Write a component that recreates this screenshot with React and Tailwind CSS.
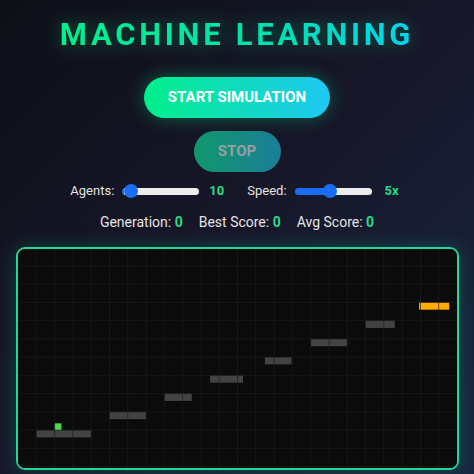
import { useState } from 'react';

// plataformas en coordenadas del canvas (960x480)
const plataformas = [
  { x: 40, y: 397, w: 120 },
  { x: 200, y: 357, w: 80 },
  { x: 320, y: 317, w: 60 },
  { x: 420, y: 277, w: 72 },
  { x: 540, y: 237, w: 58 },
  { x: 640, y: 197, w: 80 },
  { x: 760, y: 157, w: 64 },
];

const meta = { x: 877, y: 117, w: 66 };

const Lienzo = () => {
  const lineasV = [];
  for (let x = 40; x < 960; x += 40) lineasV.push(x);
  const lineasH = [];
  for (let y = 37; y < 480; y += 40) lineasH.push(y);

  return (
    <svg viewBox="0 0 960 480" preserveAspectRatio="none" className="block w-full h-full">
      <rect x="0" y="0" width="960" height="480" fill="#0b0b0c" />
      {plataformas.map((p, i) => (
        <rect key={i} x={p.x} y={p.y} width={p.w} height="16" fill="#434343" />
      ))}
      <rect x={meta.x} y={meta.y} width={meta.w} height="16" fill="#ffaa00" />
      <rect x="80" y="382" width="15" height="15" fill="#44dd44" />
      <g stroke="#1e1e1e" strokeOpacity="0.75" strokeWidth="2">
        {lineasV.map((x) => (
          <line key={'v' + x} x1={x} y1="0" x2={x} y2="480" />
        ))}
        {lineasH.map((y) => (
          <line key={'h' + y} x1="0" y1={y} x2="960" y2={y} />
        ))}
      </g>
    </svg>
  );
};

const Deslizador = ({ min, max, value, onChange, className }) => {
  const pct = ((value - min) / (max - min)) * 100;
  return (
    <input
      type="range"
      min={min}
      max={max}
      value={value}
      onChange={(e) => onChange(Number(e.target.value))}
      style={{
        background: `linear-gradient(90deg, #1a6ef5 0%, #1a6ef5 ${pct}%, #ececec ${pct}%, #ececec 100%)`,
      }}
      className={
        'appearance-none h-[7px] rounded-full outline-none cursor-pointer ' +
        '[&::-webkit-slider-thumb]:appearance-none [&::-webkit-slider-thumb]:w-[14px] [&::-webkit-slider-thumb]:h-[14px] ' +
        '[&::-webkit-slider-thumb]:rounded-full [&::-webkit-slider-thumb]:bg-[#1a6ef5] ' +
        className
      }
    />
  );
};

const App = () => {
  const [agentes, setAgentes] = useState(10);
  const [velocidad, setVelocidad] = useState(5);

  return (
    <div
      className="min-h-screen w-full flex flex-col items-center bg-[linear-gradient(135deg,#0f0f18_0%,#17172a_50%,#182640_100%)] text-[#e4e4e4]"
      style={{ fontFamily: 'Roboto, "Liberation Sans", sans-serif' }}
    >
      <h1 className="pt-[19px] text-[31px] leading-none font-bold tracking-[3.7px] bg-[linear-gradient(90deg,#00f08a,#00e0b0_60%,#00d4ee)] bg-clip-text text-transparent drop-shadow-[0_0_10px_rgba(0,255,150,0.35)]">
        MACHINE LEARNING
      </h1>

      <button className="mt-[27px] w-[186px] h-[41px] rounded-full bg-[linear-gradient(90deg,#00f08a,#1ec8f2)] text-white text-[15px] font-bold shadow-[0_0_18px_rgba(0,240,140,0.35)]">
        START SIMULATION
      </button>

      <button
        disabled
        className="mt-[13px] w-[87px] h-[41px] rounded-full bg-[linear-gradient(90deg,#10986b,#1b7e98)] text-[#97a0a0] text-[15px] font-bold"
      >
        STOP
      </button>

      <div className="mt-[9px] h-[20px] pr-[5px] flex items-center text-[13px]">
        <span>Agents:</span>
        <Deslizador min={5} max={200} value={agentes} onChange={setAgentes} className="ml-[8px] w-[77px]" />
        <span className="ml-[10px] w-[18px] font-bold text-[#22dd88]">{agentes}</span>
        <span className="ml-[20px]">Speed:</span>
        <Deslizador min={1} max={10} value={velocidad} onChange={setVelocidad} className="ml-[8px] w-[77px]" />
        <span className="ml-[13px] font-bold text-[#22dd88]">{velocidad}x</span>
      </div>

      <div className="mt-[11px] h-[20px] flex items-center gap-[16px] text-[14px]">
        <span>
          Generation: <span className="font-bold text-[#22dd88]">0</span>
        </span>
        <span>
          Best Score: <span className="font-bold text-[#22dd88]">0</span>
        </span>
        <span>
          Avg Score: <span className="font-bold text-[#22dd88]">0</span>
        </span>
      </div>

      <div className="mt-[15px] w-[443px] h-[223px] rounded-[9px] border-2 border-[#22d896] overflow-hidden shadow-[0_0_20px_rgba(0,220,150,0.25)]">
        <Lienzo />
      </div>
    </div>
  );
};

export default App;
